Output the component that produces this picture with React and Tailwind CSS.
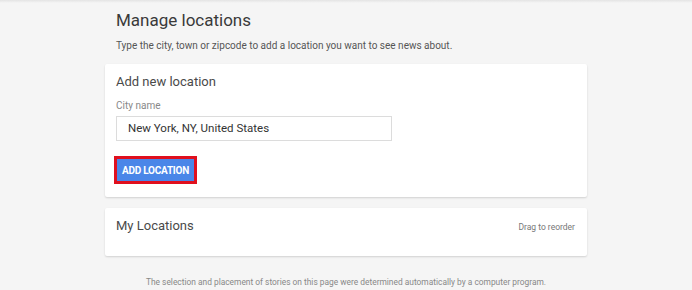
export default function App() {
    return (
        <div className="w-[692px] h-[290px] overflow-hidden bg-[#f5f5f5] relative" style={{ fontFamily: "Roboto, 'Liberation Sans', sans-serif" }}>
            <div className="absolute top-0 left-0 right-0 h-[3px] bg-gradient-to-b from-[#e4e4e4] to-[#f5f5f5]" />
            <div className="w-[482px] ml-[105px] pt-[9px]">
                <h1 className="pl-[11px] text-[17px] leading-[22px] text-[#3a3a3a]">Manage locations</h1>
                <p className="pl-[11px] mt-[8px] text-[10px] leading-[14px] text-[#555]">
                    Type the city, town or zipcode to add a location you want to see news about.
                </p>
                <div className="mt-[11px] h-[133px] bg-white rounded-[2px] shadow-[0_1px_2px_rgba(0,0,0,0.15)] px-[11px] pt-[9px]">
                    <h2 className="text-[13px] leading-[18px] text-[#4a4a4a]">Add new location</h2>
                    <div className="mt-[9px] text-[10px] leading-[12px] text-[#888]">City name</div>
                    <div className="mt-[4px] w-[276px] h-[25px] border border-[#dcdcdc] flex items-center pl-[11px] text-[11.5px] text-[#333]">
                        New York, NY, United States
                    </div>
                    <div className="mt-[15px] -ml-[2px] inline-block border-[3px] border-[#e0101e]">
                        <button className="w-[77px] h-[22px] bg-[#4a86e8] text-white text-[10px] font-bold tracking-tight flex items-center justify-center">
                            ADD LOCATION
                        </button>
                    </div>
                </div>
                <div className="mt-[11px] h-[48px] bg-white rounded-[2px] shadow-[0_1px_2px_rgba(0,0,0,0.15)] px-[11px] pt-[9px] flex justify-between items-start">
                    <h2 className="text-[13px] leading-[18px] text-[#4a4a4a]">My Locations</h2>
                    <span className="text-[8.5px] leading-[12px] text-[#777] mt-[4px] pr-[1px]">Drag to reorder</span>
                </div>
                <p className="mt-[20px] text-center text-[8.4px] leading-[12px] text-[#888]">
                    The selection and placement of stories on this page were determined automatically by a computer program.
                </p>
            </div>
        </div>
    );
}
